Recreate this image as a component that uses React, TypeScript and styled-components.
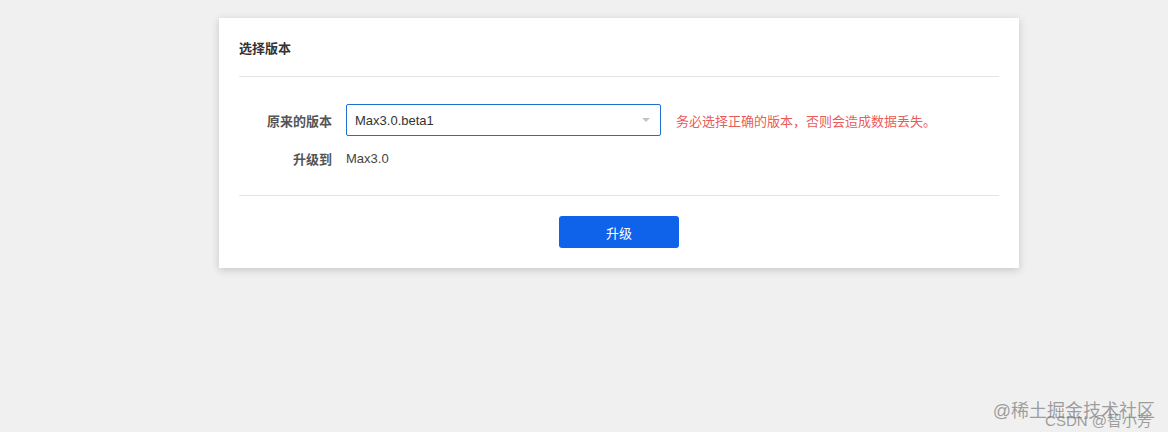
import React from 'react';
import styled, { createGlobalStyle } from 'styled-components';

const GlobalStyle = createGlobalStyle`
	html, body, #root {
		margin: 0;
		height: 100%;
	}
	body {
		background: #f0f0f0;
		font-family: "Liberation Sans", Arial, "Noto Sans CJK SC", sans-serif;
		overflow: hidden;
	}
`;

const App = () => {
	return (
		<>
			<GlobalStyle />
			<Page>
				<Card>
					<Header>选择版本</Header>
					<Body>
						<Row>
							<Label>原来的版本</Label>
							<Select>
								<span>Max3.0.beta1</span>
								<Caret />
							</Select>
							<Hint>务必选择正确的版本，否则会造成数据丢失。</Hint>
						</Row>
						<Row $short>
							<Label>升级到</Label>
							<Value>Max3.0</Value>
						</Row>
					</Body>
					<Footer>
						<Button>升级</Button>
					</Footer>
				</Card>
				<Watermark>@稀土掘金技术社区</Watermark>
				<Signature>CSDN @智小芳</Signature>
			</Page>
		</>
	);
};

const Page = styled.div`
	position: relative;
	height: 100%;
	padding-top: 18px;
	box-sizing: border-box;
`;

const Card = styled.div`
	width: 800px;
	margin-left: 219px;
	background: #fff;
	box-shadow: 0 2px 8px rgba(0, 0, 0, 0.18);
`;

const Header = styled.div`
	margin: 0 20px;
	height: 58px;
	display: flex;
	align-items: center;
	border-bottom: 1px solid #e4e4e4;
	font-size: 13px;
	font-weight: bold;
	color: #333;
`;

const Body = styled.div`
	margin: 0 20px;
	padding: 27px 0 27px;
	display: flex;
	flex-direction: column;
	gap: 12px;
	border-bottom: 1px solid #e4e4e4;
`;

const Row = styled.div<{ $short?: boolean }>`
	display: flex;
	align-items: center;
	height: ${p => (p.$short ? '20px' : '32px')};
`;

const Label = styled.div`
	width: 93px;
	margin-right: 14px;
	text-align: right;
	font-size: 13px;
	font-weight: bold;
	color: #555;
`;

const Select = styled.div`
	width: 315px;
	height: 32px;
	box-sizing: border-box;
	border: 1px solid #1f6fd0;
	border-radius: 2px;
	padding: 0 10px 0 8px;
	display: flex;
	align-items: center;
	justify-content: space-between;
	font-size: 13px;
	color: #333;
`;

const Caret = styled.i`
	width: 0;
	height: 0;
	border-left: 4px solid transparent;
	border-right: 4px solid transparent;
	border-top: 4px solid #c4c4c4;
`;

const Hint = styled.div`
	margin-left: 15px;
	font-size: 13px;
	color: #e95c5c;
`;

const Value = styled.div`
	font-size: 13px;
	color: #444;
`;

const Footer = styled.div`
	padding: 20px 0;
	display: flex;
	justify-content: center;
`;

const Button = styled.button`
	width: 120px;
	height: 32px;
	border: none;
	border-radius: 3px;
	background: #0f63eb;
	color: #fff;
	font-family: inherit;
	font-size: 13px;
	cursor: pointer;
`;

const Watermark = styled.div`
	position: absolute;
	right: 13px;
	top: 396px;
	font-size: 18px;
	color: rgba(120, 120, 120, 0.7);
`;

const Signature = styled.div`
	position: absolute;
	right: 16px;
	top: 409px;
	font-size: 15px;
	color: rgba(120, 120, 120, 0.7);
`;

export default App;
